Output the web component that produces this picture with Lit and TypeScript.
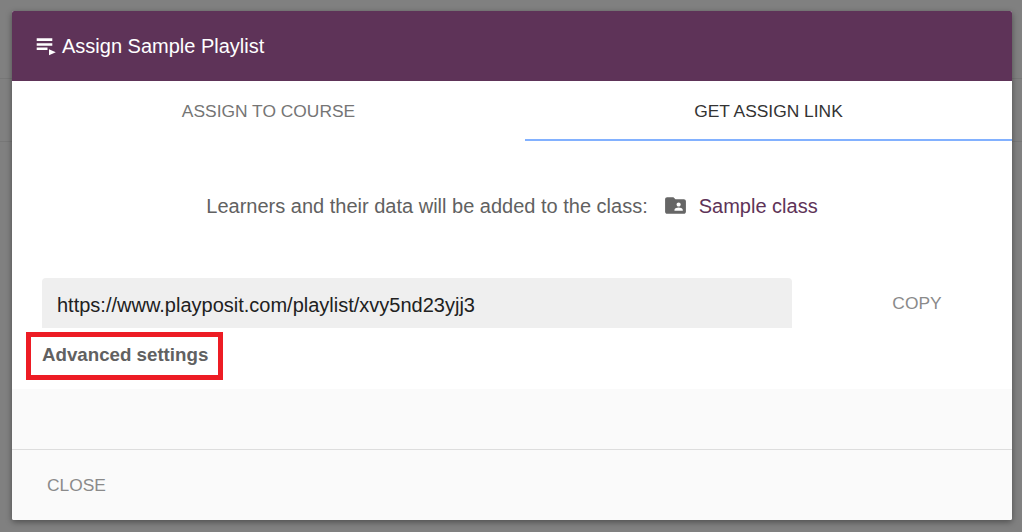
import { LitElement, html, css } from "lit";
import { customElement } from "lit/decorators.js";

@customElement("app-root")
export default class AppRoot extends LitElement {
	static override styles = css`
		:host {
			display: block;
			box-sizing: border-box;
			width: 1022px;
			height: 532px;
			padding: 11px 10px 12px 12px;
			background:
				linear-gradient(#777, #777) 0 78px / 100% 1px no-repeat,
				linear-gradient(#777, #777) 0 141px / 100% 1px no-repeat,
				#808080;
			font-family: "Liberation Sans", Arial, sans-serif;
			overflow: hidden;
		}

		.modal {
			display: flex;
			flex-direction: column;
			height: 509px;
			border-radius: 2px;
			overflow: hidden;
			background: #fff;
			box-shadow: 0 2px 6px rgba(0, 0, 0, 0.4);
		}

		.header {
			display: flex;
			align-items: center;
			gap: 3px;
			height: 70px;
			padding-left: 23px;
			background: #5e3358;
			color: #fff;
			font-size: 20px;
			flex: none;
		}

		.header svg {
			width: 24px;
			height: 24px;
			fill: #fff;
		}

		.tabs {
			display: flex;
			height: 60px;
			flex: none;
		}

		.tab {
			width: 513px;
			display: flex;
			align-items: center;
			justify-content: center;
			box-sizing: border-box;
			font-size: 17.4px;
			color: #757575;
		}

		.tab.active {
			width: 487px;
			color: #333;
			border-bottom: 2px solid #82b1ff;
			padding-top: 2px;
		}

		.content {
			height: 248px;
			flex: none;
			box-sizing: border-box;
			padding: 0 30px;
		}

		.target {
			display: flex;
			align-items: center;
			justify-content: center;
			height: 130px;
			font-size: 20px;
			color: #616161;
		}

		.target svg {
			width: 25px;
			height: 25px;
			fill: #666;
			margin: 0 11px 2px 15px;
		}

		.target .name {
			color: #5e3358;
		}

		.link-row {
			display: flex;
			margin-top: 7px;
		}

		.url {
			width: 750px;
			height: 50px;
			box-sizing: border-box;
			padding: 4px 15px 0;
			display: flex;
			align-items: center;
			background: #efefef;
			border-radius: 4px 4px 0 0;
			font-size: 20px;
			color: #212121;
		}

		.copy {
			flex: 1;
			display: flex;
			justify-content: center;
			padding: 15px 0 0 60px;
			font-size: 17.4px;
			color: #8a8a8a;
		}

		.advanced {
			position: relative;
			display: inline-block;
			margin-top: 16px;
			font-size: 18.72px;
			line-height: 21px;
			font-weight: 700;
			color: #616161;
		}

		.mark {
			position: absolute;
			left: -16px;
			right: -15px;
			top: -12px;
			bottom: -15px;
			border: 5px solid #ed1c24;
		}

		.filler {
			height: 60px;
			flex: none;
			background: #fafafa;
			border-bottom: 1px solid #ddd;
		}

		.footer {
			flex: 1;
			display: flex;
			align-items: center;
			padding-left: 35px;
			background: #fafafa;
			font-size: 17.4px;
			color: #8a8a8a;
		}
	`;

	override render() {
		return html`<div class="modal">
			<div class="header">
				<svg viewBox="0 0 24 24"><path d="M1.700 4.300h15.600V7H1.700zM1.700 9.200h15.600v2.500H1.700zM1.700 13.400h10.800v2.700H1.700zM14 15.300l6.800 3-6.800 3z"></path></svg>
				<span>Assign Sample Playlist</span>
			</div>
			<div class="tabs">
				<div class="tab">ASSIGN TO COURSE</div>
				<div class="tab active">GET ASSIGN LINK</div>
			</div>
			<div class="content">
				<div class="target">
					<span>Learners and their data will be added to the class:</span>
					<svg viewBox="0 0 24 24"><path d="M20 6h-8l-2-2H4c-1.100 0-2 .9-2 2v12c0 1.100.9 2 2 2h16c1.100 0 2-.9 2-2V8c0-1.100-.9-2-2-2zm-5 3c1.100 0 2 .9 2 2s-.9 2-2 2-2-.9-2-2 .9-2 2-2zm4 8h-8v-1c0-1.330 2.670-2 4-2s4 .67 4 2v1z"></path></svg>
					<span class="name">Sample class</span>
				</div>
				<div class="link-row">
					<div class="url">https://www.playposit.com/playlist/xvy5nd23yjj3</div>
					<div class="copy">COPY</div>
				</div>
				<div class="advanced">Advanced settings<span class="mark"></span></div>
			</div>
			<div class="filler"></div>
			<div class="footer">CLOSE</div>
		</div>`;
	}
}

declare global {
	interface HTMLElementTagNameMap {
		"app-root": AppRoot;
	}
}
